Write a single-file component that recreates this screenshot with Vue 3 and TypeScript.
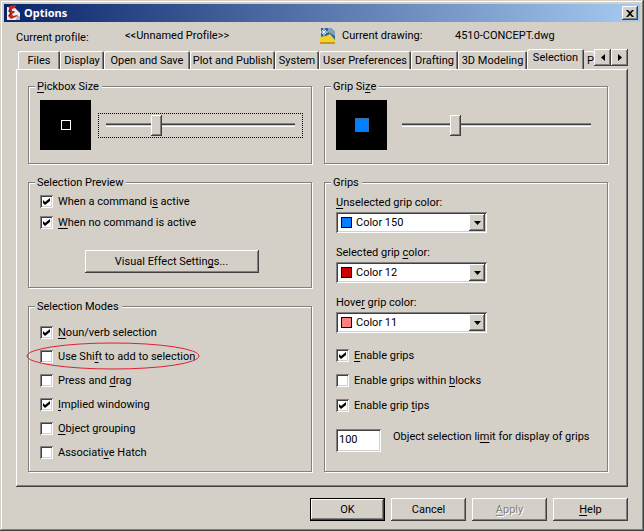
<script setup lang="ts">
import { ref } from 'vue'

type Caption = [before: string, key: string, after: string]

interface Check {
  id: string
  caption: Caption
  on: boolean
  marked?: boolean
}

interface ColorField {
  id: string
  caption: Caption
  value: string
}

const tabs = [
  'Files', 'Display', 'Open and Save', 'Plot and Publish', 'System',
  'User Preferences', 'Drafting', '3D Modeling', 'Selection', 'P',
]
const activeTab = ref('Selection')

const pickboxSize = ref(25)
const gripSize = ref(27)
const gripLimit = ref('100')

const preview = ref<Check[]>([
  { id: 'active', caption: ['When a command i', 's', ' active'], on: true },
  { id: 'idle', caption: ['', 'W', 'hen no command is active'], on: true },
])

const modes = ref<Check[]>([
  { id: 'noun', caption: ['', 'N', 'oun/verb selection'], on: true },
  { id: 'shift', caption: ['Use Shi', 'f', 't to add to selection'], on: false, marked: true },
  { id: 'drag', caption: ['Press and ', 'd', 'rag'], on: false },
  { id: 'implied', caption: ['', 'I', 'mplied windowing'], on: true },
  { id: 'group', caption: ['', 'O', 'bject grouping'], on: false },
  { id: 'hatch', caption: ['Associati', 'v', 'e Hatch'], on: false },
])

const gripChecks = ref<Check[]>([
  { id: 'grips', caption: ['', 'E', 'nable grips'], on: true },
  { id: 'blocks', caption: ['Enable grips within ', 'b', 'locks'], on: false },
  { id: 'tips', caption: ['Enable grip ', 't', 'ips'], on: true },
])

const swatches: Record<string, string> = {
  'Color 150': '#0080ff',
  'Color 12': '#cc0000',
  'Color 11': '#ff7f7f',
}

const colors = ref<ColorField[]>([
  { id: 'unselected', caption: ['', 'U', 'nselected grip color:'], value: 'Color 150' },
  { id: 'selected', caption: ['Selected grip ', 'c', 'olor:'], value: 'Color 12' },
  { id: 'hover', caption: ['Hove', 'r', ' grip color:'], value: 'Color 11' },
])
</script>

<template>
  <main class="window">
    <header class="titlebar">
      <svg class="app-icon" viewBox="0 0 16 16" aria-hidden="true">
        <path d="M1 2H8L14 8V15H1Z" fill="#f1ecee" />
        <path d="M3 1L10 0L9 3L6 4V6L9 6L8 8L6 9L7 11L11 10L12 11L5 14L2 11L4 8L2 6L4 4Z" fill="#c5281c" />
        <path d="M3 2L4 4L3 6L5 8L3 11" fill="none" stroke="#7d1410" />
        <path d="M10 14H14M11 12H14" stroke="#85818c" />
      </svg>
      <h1>Options</h1>
      <button class="close" type="button" aria-label="Close">
        <svg viewBox="0 0 8 7" aria-hidden="true"><path d="M0 0H2L4 2L6 0H8L5 3.5L8 7H6L4 5L2 7H0L3 3.5Z" /></svg>
      </button>
    </header>

    <div class="info">
      <span class="low">Current profile:</span>
      <span>&lt;&lt;Unnamed Profile&gt;&gt;</span>
      <span class="drawing">
        <svg viewBox="0 0 16 16" aria-hidden="true">
          <path d="M1 0H11L15 4V15H1Z" fill="#35658f" />
          <path d="M8 0H11L15 4V8L8 4Z" fill="#7fa3bf" />
          <path d="M0 9L6 8L10 6L15 12V15H0Z" fill="#f4d22c" />
          <path d="M0 15H15" stroke="#c8991c" stroke-width="2" />
          <path d="M4 0V8M0 4H8M2 2L6 6M6 2L2 6" stroke="#e8f3ff" />
        </svg>
        Current drawing:
      </span>
      <span>4510-CONCEPT.dwg</span>
    </div>

    <nav class="tabbar">
      <div class="tabs" role="tablist">
        <button
          v-for="tab in tabs"
          :key="tab"
          type="button"
          role="tab"
          class="tab"
          :class="{ active: tab === activeTab }"
          :aria-selected="tab === activeTab"
          @click="activeTab = tab"
        >{{ tab }}</button>
      </div>
      <button class="raised scroll" type="button" aria-label="Scroll tabs left">
        <svg viewBox="0 0 4 7" aria-hidden="true"><path d="M4 0V7L0 3.5Z" /></svg>
      </button>
      <button class="raised scroll" type="button" aria-label="Scroll tabs right">
        <svg viewBox="0 0 4 7" aria-hidden="true"><path d="M0 0V7L4 3.5Z" /></svg>
      </button>
    </nav>

    <section class="panel">
      <div class="column">
        <fieldset class="size">
          <legend><label for="pickbox"><u>P</u>ickbox Size</label></legend>
          <div class="size-row">
            <div class="preview"><span class="pickbox"></span></div>
            <div class="slider focused"><input id="pickbox" v-model="pickboxSize" type="range" min="0" max="100" /></div>
          </div>
        </fieldset>

        <fieldset class="selection-preview">
          <legend>Selection Preview</legend>
          <div class="checks tight">
            <label v-for="c in preview" :key="c.id" class="check">
              <input v-model="c.on" type="checkbox" />
              <span>{{ c.caption[0] }}<u>{{ c.caption[1] }}</u>{{ c.caption[2] }}</span>
            </label>
          </div>
          <button class="raised visual" type="button">Visual Effect Settin<u>g</u>s...</button>
        </fieldset>

        <fieldset class="modes">
          <legend>Selection Modes</legend>
          <div class="checks">
            <label v-for="c in modes" :key="c.id" class="check">
              <input v-model="c.on" type="checkbox" />
              <span>{{ c.caption[0] }}<u>{{ c.caption[1] }}</u>{{ c.caption[2] }}</span>
              <svg v-if="c.marked" class="ring" viewBox="0 0 174 28" aria-hidden="true">
                <ellipse cx="87" cy="14" rx="86" ry="13" />
              </svg>
            </label>
          </div>
        </fieldset>
      </div>

      <div class="column">
        <fieldset class="size">
          <legend><label for="gripsize">Grip Si<u>z</u>e</label></legend>
          <div class="size-row">
            <div class="preview"><span class="grip"></span></div>
            <div class="slider"><input id="gripsize" v-model="gripSize" type="range" min="0" max="100" /></div>
          </div>
        </fieldset>

        <fieldset class="grips">
          <legend>Grips</legend>
          <div class="colors">
            <div v-for="f in colors" :key="f.id" class="color">
              <label :for="f.id">{{ f.caption[0] }}<u>{{ f.caption[1] }}</u>{{ f.caption[2] }}</label>
              <div class="combo">
                <select :id="f.id" v-model="f.value">
                  <option v-for="(_, name) in swatches" :key="name">{{ name }}</option>
                </select>
                <span class="swatch" :style="{ background: swatches[f.value] }"></span>
                <span class="raised arrow">
                  <svg viewBox="0 0 7 4" aria-hidden="true"><path d="M0 0H7L3.5 4Z" /></svg>
                </span>
              </div>
            </div>
          </div>
          <div class="checks loose">
            <label v-for="c in gripChecks" :key="c.id" class="check">
              <input v-model="c.on" type="checkbox" />
              <span>{{ c.caption[0] }}<u>{{ c.caption[1] }}</u>{{ c.caption[2] }}</span>
            </label>
          </div>
          <div class="limit">
            <input id="limit" v-model="gripLimit" type="text" />
            <label for="limit">Object selection li<u>m</u>it for display of grips</label>
          </div>
        </fieldset>
      </div>
    </section>

    <footer class="actions">
      <button class="raised default" type="button">OK</button>
      <button class="raised" type="button">Cancel</button>
      <button class="raised" type="button" disabled><u>A</u>pply</button>
      <button class="raised" type="button"><u>H</u>elp</button>
    </footer>
  </main>
</template>

<style>
body {
  margin: 0;
  background: #d4d0c8;
}
</style>

<style scoped>
* {
  box-sizing: border-box;
}

.window {
  display: flex;
  flex-direction: column;
  min-height: 100vh;
  padding: 4px;
  background: #d4d0c8;
  box-shadow: inset -1px -1px 0 #404040, inset 1px 1px 0 #d4d0c8,
    inset -2px -2px 0 #808080, inset 2px 2px 0 #ffffff;
  color: #000;
  font: 11px/15px Roboto, "Liberation Sans", sans-serif;
  font-variant-ligatures: none;
  white-space: nowrap;
}

button,
input,
select {
  margin: 0;
  color: inherit;
  font: inherit;
}

u {
  text-underline-offset: 2px;
  text-decoration-thickness: 1px;
  text-decoration-skip-ink: none;
}

.titlebar {
  display: flex;
  align-items: center;
  gap: 2px;
  height: 18px;
  padding: 0 2px;
  background: linear-gradient(to right, #0a246a, #a6caf0);
}

.app-icon {
  width: 16px;
  height: 16px;
}

h1 {
  flex: 1;
  margin: 0;
  color: #fff;
  font: bold 11px/16px "Noto Sans", "DejaVu Sans", sans-serif;
}

.raised,
.close {
  display: flex;
  align-items: center;
  justify-content: center;
  padding: 0;
  border: 0;
  background: #d4d0c8;
  box-shadow: inset -1px -1px 0 #404040, inset 1px 1px 0 #ffffff,
    inset -2px -2px 0 #808080;
}

.raised {
  display: block;
  text-align: center;
}

.close {
  width: 16px;
  height: 14px;
}

.close svg {
  width: 8px;
  height: 7px;
}

.info {
  display: grid;
  grid-template-columns: 109fr 195fr 135fr 173fr;
  padding: 6px 12px 0;
}

.low {
  padding-top: 2px;
}

.drawing {
  display: flex;
  gap: 6px;
}

.drawing svg {
  width: 16px;
  height: 16px;
}

.tabbar {
  display: flex;
  align-items: flex-start;
  padding: 4px 12px 0 14px;
}

.tabs {
  display: grid;
  flex: 1;
  grid-template-columns:
    minmax(0, 42fr) minmax(0, 44fr) minmax(0, 86fr) minmax(0, 85fr) minmax(0, 44fr)
    minmax(0, 92fr) minmax(0, 47fr) minmax(0, 69fr) minmax(0, 57fr) minmax(0, 10fr);
  align-items: end;
  height: 20px;
  overflow: hidden;
}

.tab {
  height: 18px;
  padding: 0;
  overflow: hidden;
  border: 0;
  border-radius: 2px 2px 0 0;
  background: #d4d0c8;
  box-shadow: inset 1px 1px 0 #ffffff, inset -1px 0 0 #404040, inset -2px 0 0 #808080;
  text-align: center;
}

.tab:last-child {
  padding-left: 3px;
  box-shadow: inset 0 1px 0 #ffffff;
  text-align: left;
}

.tab.active {
  position: relative;
  height: 20px;
  padding-bottom: 4px;
}

.scroll {
  width: 17px;
  height: 17px;
}

.scroll svg {
  width: 4px;
  height: 7px;
}

.panel {
  display: grid;
  flex: 1;
  grid-template-columns: 1fr 1fr;
  gap: 12px;
  margin: 0 12px;
  padding: 10px 20px 15px 12px;
  box-shadow: inset -1px -1px 0 #404040, inset 1px 1px 0 #ffffff,
    inset -2px -2px 0 #808080;
}

.column {
  display: flex;
  flex-direction: column;
  gap: 11px;
  min-width: 0;
}

fieldset {
  min-width: 0;
  margin: 0;
  padding: 0 8px 0 11px;
  border: 1px solid #808080;
  box-shadow: 1px 1px 0 #ffffff, inset 1px 1px 0 #ffffff;
}

legend {
  height: 15px;
  margin-left: -5px;
  padding: 0 3px 0 2px;
  background: #d4d0c8;
}

.size {
  padding-bottom: 13px;
}

.size-row {
  display: flex;
  align-items: center;
  gap: 7px;
  padding-top: 6px;
}

.preview {
  display: flex;
  flex: none;
  align-items: center;
  justify-content: center;
  width: 51px;
  height: 50px;
  background: #000;
}

.pickbox {
  width: 10px;
  height: 10px;
  border: 1px solid #fff;
}

.grip {
  width: 14px;
  height: 14px;
  border: 1px solid #3a6ea5;
  background: #0080ff;
}

.slider {
  flex: 1;
  min-width: 0;
  height: 25px;
  padding: 0 7px;
  border: 1px solid transparent;
}

.focused {
  border: 1px dotted #000;
}

input[type="range"] {
  display: block;
  width: 100%;
  height: 23px;
  outline: 0;
  background: transparent;
  appearance: none;
}

input[type="range"]::-webkit-slider-runnable-track {
  height: 4px;
  background: linear-gradient(#808080 0 1px, #404040 1px 2px, #d4d0c8 2px 3px, #ffffff 3px);
}

input[type="range"]::-webkit-slider-thumb {
  width: 11px;
  height: 21px;
  margin-top: -8px;
  background: #d4d0c8;
  box-shadow: inset -1px -1px 0 #404040, inset 1px 1px 0 #ffffff,
    inset -2px -2px 0 #808080;
  appearance: none;
}

.checks {
  display: flex;
  flex-direction: column;
  align-items: flex-start;
  gap: 9px;
}

.tight {
  gap: 6px;
}

.loose {
  gap: 10px;
}

.check {
  display: flex;
  position: relative;
  align-items: center;
  gap: 5px;
}

input[type="checkbox"] {
  width: 13px;
  height: 13px;
  padding: 3px;
  background: #fff;
  box-shadow: inset 1px 1px 0 #808080, inset -1px -1px 0 #ffffff,
    inset 2px 2px 0 #404040, inset -2px -2px 0 #d4d0c8;
  appearance: none;
}

input[type="checkbox"]:checked::before {
  display: block;
  width: 7px;
  height: 7px;
  background: #000;
  clip-path: polygon(0 2px, 2px 4px, 7px 0, 7px 3px, 2px 7px, 0 5px);
  content: "";
}

.ring {
  position: absolute;
  top: -7px;
  left: -14px;
  width: 174px;
  height: 28px;
  fill: none;
  stroke: #e02030;
  pointer-events: none;
}

.selection-preview {
  padding-bottom: 14px;
}

.selection-preview .checks {
  padding-top: 4px;
}

.visual {
  width: 174px;
  height: 23px;
  margin: 20px auto 0;
}

.modes {
  flex: 1;
}

.modes .checks {
  padding-top: 11px;
}

.grips {
  flex: 1;
}

.colors {
  display: flex;
  flex-direction: column;
  gap: 12px;
  padding-top: 5px;
}

.color {
  display: flex;
  flex-direction: column;
  gap: 2px;
}

.combo {
  position: relative;
  width: 151px;
}

select {
  display: block;
  width: 100%;
  height: 21px;
  padding: 0 20px;
  border: 0;
  border-radius: 0;
  background: #fff;
  box-shadow: inset 1px 1px 0 #808080, inset -1px -1px 0 #ffffff,
    inset 2px 2px 0 #404040, inset -2px -2px 0 #d4d0c8;
  appearance: none;
}

.swatch {
  position: absolute;
  top: 5px;
  left: 5px;
  width: 11px;
  height: 11px;
  border: 1px solid #000;
  pointer-events: none;
}

.arrow {
  display: flex;
  position: absolute;
  top: 2px;
  right: 2px;
  width: 16px;
  height: 17px;
  pointer-events: none;
}

.arrow svg {
  width: 7px;
  height: 4px;
}

.grips .checks {
  padding-top: 15px;
}

.limit {
  display: flex;
  align-items: flex-start;
  gap: 12px;
  padding-top: 16px;
}

.limit input {
  width: 45px;
  height: 23px;
  padding: 0 3px 3px;
  border: 0;
  background: #fff;
  box-shadow: inset 1px 1px 0 #808080, inset -1px -1px 0 #ffffff,
    inset 2px 2px 0 #404040, inset -2px -2px 0 #d4d0c8;
}

.actions {
  display: flex;
  justify-content: flex-end;
  gap: 6px;
  padding: 11px 12px 6px;
}

.actions button {
  width: 75px;
  height: 23px;
}

.actions .default {
  border: 1px solid #000;
}

.actions button:disabled {
  color: #808080;
  text-shadow: 1px 1px 0 #fff;
}
</style>
